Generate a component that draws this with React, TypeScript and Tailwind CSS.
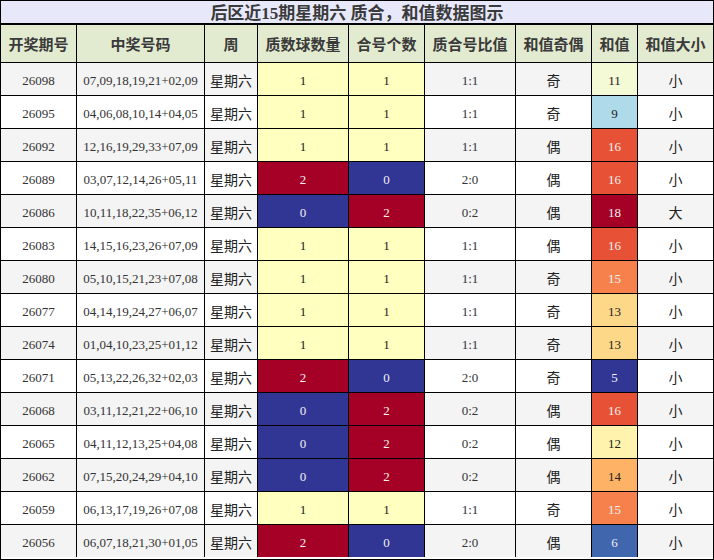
import React from "react";

type Row = [string, string, number, number, string, string, number, string];

const rows: Row[] = [
  ["26098", "07,09,18,19,21+02,09", 1, 1, "1:1", "奇", 11, "小"],
  ["26095", "04,06,08,10,14+04,05", 1, 1, "1:1", "奇", 9, "小"],
  ["26092", "12,16,19,29,33+07,09", 1, 1, "1:1", "偶", 16, "小"],
  ["26089", "03,07,12,14,26+05,11", 2, 0, "2:0", "偶", 16, "小"],
  ["26086", "10,11,18,22,35+06,12", 0, 2, "0:2", "偶", 18, "大"],
  ["26083", "14,15,16,23,26+07,09", 1, 1, "1:1", "偶", 16, "小"],
  ["26080", "05,10,15,21,23+07,08", 1, 1, "1:1", "奇", 15, "小"],
  ["26077", "04,14,19,24,27+06,07", 1, 1, "1:1", "奇", 13, "小"],
  ["26074", "01,04,10,23,25+01,12", 1, 1, "1:1", "奇", 13, "小"],
  ["26071", "05,13,22,26,32+02,03", 2, 0, "2:0", "奇", 5, "小"],
  ["26068", "03,11,12,21,22+06,10", 0, 2, "0:2", "偶", 16, "小"],
  ["26065", "04,11,12,13,25+04,08", 0, 2, "0:2", "偶", 12, "小"],
  ["26062", "07,15,20,24,29+04,10", 0, 2, "0:2", "偶", 14, "小"],
  ["26059", "06,13,17,19,26+07,08", 1, 1, "1:1", "奇", 15, "小"],
  ["26056", "06,07,18,21,30+01,05", 2, 0, "2:0", "偶", 6, "小"],
];

const countCls: Record<number, string> = {
  0: "bg-[#313695] text-[#f1f1f1]",
  1: "bg-[#ffffbf] text-[#222]",
  2: "bg-[#a50026] text-[#f1f1f1]",
};

const sumCls: Record<number, string> = {
  5: "bg-[#313695] text-[#f1f1f1]",
  6: "bg-[#4066ad] text-[#f1f1f1]",
  9: "bg-[#aedaea] text-[#222]",
  11: "bg-[#f3fad5] text-[#222]",
  12: "bg-[#fff3ad] text-[#222]",
  13: "bg-[#fed889] text-[#222]",
  14: "bg-[#fdb265] text-[#222]",
  15: "bg-[#f7814c] text-[#f1f1f1]",
  16: "bg-[#e75136] text-[#f1f1f1]",
  18: "bg-[#a50026] text-[#f1f1f1]",
};

const headers = ["开奖期号", "中奖号码", "周", "质数球数量", "合号个数", "质合号比值", "和值奇偶", "和值", "和值大小"];

const font = "font-['Liberation_Serif','Noto_Sans_CJK_SC',serif]";

export default function App() {
  return (
    <div className={`w-[714px] h-[560px] border border-black bg-white ${font}`}>
      <div className="h-[24px] pt-[3px] bg-[#e7e9fb] border-b-2 border-black flex items-center justify-center text-[17px] font-bold text-[#3a3a3a] leading-none">
        后区近15期星期六 质合，和值数据图示
      </div>
      <div className="grid grid-cols-[75px_127px_52px_90px_75px_90px_75px_45px_75px] gap-px bg-black">
        {headers.map((h) => (
          <div key={h} className="h-[37px] pt-[4px] bg-[#e2ebd0] flex items-center justify-center text-[15px] font-bold text-[#3a3a3a]">
            {h}
          </div>
        ))}
        {rows.map((r, i) => {
          const base = i % 2 === 0 ? "bg-[#f4f4f4]" : "bg-white";
          const cell = "h-[32px] pt-[4px] flex items-center justify-center";
          return (
            <React.Fragment key={r[0]}>
              <div className={`${cell} ${base} text-[13px] text-[#333]`}>{r[0]}</div>
              <div className={`${cell} ${base} text-[13px] text-[#333]`}>{r[1]}</div>
              <div className={`${cell} ${base} text-[14px] text-[#222]`}>星期六</div>
              <div className={`${cell} ${countCls[r[2]]} text-[13px]`}>{r[2]}</div>
              <div className={`${cell} ${countCls[r[3]]} text-[13px]`}>{r[3]}</div>
              <div className={`${cell} ${base} text-[13px] text-[#333]`}>{r[4]}</div>
              <div className={`${cell} ${base} text-[14px] text-[#222]`}>{r[5]}</div>
              <div className={`${cell} ${sumCls[r[6]]} text-[13px]`}>{r[6]}</div>
              <div className={`${cell} ${base} text-[14px] text-[#222]`}>{r[7]}</div>
            </React.Fragment>
          );
        })}
      </div>
    </div>
  );
}
